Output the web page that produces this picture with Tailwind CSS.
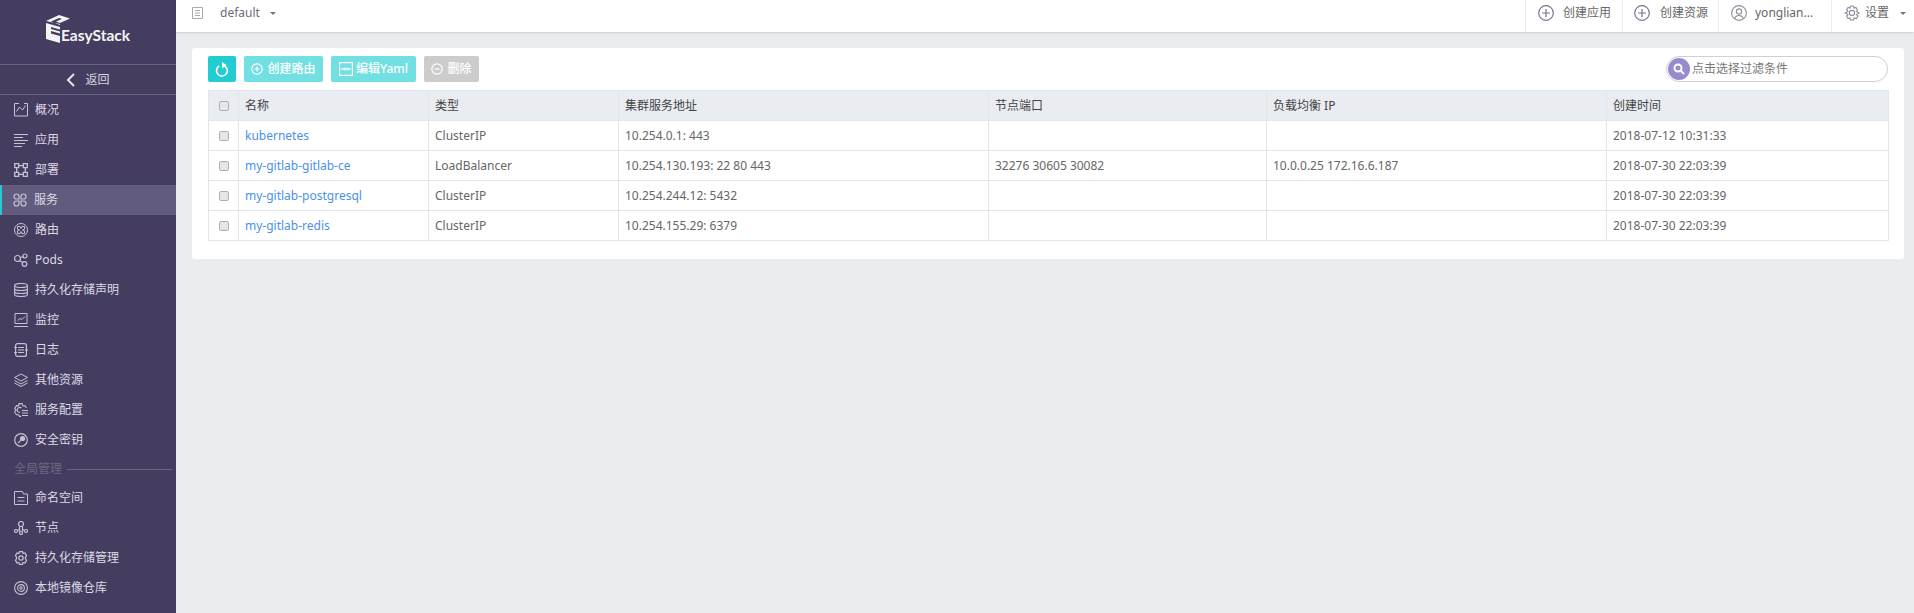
<!DOCTYPE html>
<html lang="zh">
<head>
<meta charset="UTF-8">
<title>EasyStack</title>
<script src="https://cdn.jsdelivr.net/npm/@tailwindcss/browser@4"></script>
</head>
<body class="bg-[#ebecf0] font-['Noto_Sans','Noto_Sans_CJK_SC',sans-serif] text-[12px] text-[#666]">
<div class="flex h-[613px] overflow-hidden">

  <!-- sidebar -->
  <aside class="w-[176px] shrink-0 bg-[#453d5f] text-[#dcdae6]">
    <div class="h-[65px] flex items-start pl-[46px] pt-[15px] border-b border-[#69637f]">
      <svg class="w-[24px] h-[28px] shrink-0 -mr-[9px]" viewBox="0 0 24 28" fill="#f4f4f6">
        <path d="M0 6 13 0 24 3.500 14 8 10 6.500 16 4 13 3 5 6.500 14 10V9L0 6z"/>
        <path d="M0 8 14 12V14.500L5 12V14L14 16.500V18.500L5 16V18.500L14 21V28L0 24z"/>
      </svg>
      <span class="font-['Lato',sans-serif] font-bold text-[15.5px] leading-none mt-[13px] text-[#f4f4f6]">EasyStack</span>
    </div>
    <div class="h-[30px] flex items-center justify-center gap-[9px] border-b border-[#69637f] text-[#d8d6e2]">
      <svg class="w-[10px] h-[14px]" viewBox="0 0 10 14" fill="none" stroke="#e4e3ea" stroke-width="2"><path d="M8 1 2 7l6 6"/></svg>
      <span>返回</span>
    </div>

    <nav>
      <a class="h-[30px] flex items-center pl-[14px] gap-[7px]">
        <svg class="w-[14px] h-[14px]" viewBox="0 0 14 14" fill="none" stroke="#c5c3d4"><path d="M5 .5H.5v12.500h13V.5H10M2.500 8.500l3-4.500 3 3 3-4.500"/></svg><span>概况</span>
      </a>
      <a class="h-[30px] flex items-center pl-[14px] gap-[7px]">
        <svg class="w-[14px] h-[14px]" viewBox="0 0 14 14" fill="none" stroke="#c5c3d4"><path d="M0 1.500h14M0 4.500h9M0 7.500h14M0 10.500h11M0 13.500h8"/></svg><span>应用</span>
      </a>
      <a class="h-[30px] flex items-center pl-[14px] gap-[7px]">
        <svg class="w-[14px] h-[14px]" viewBox="0 0 14 14" fill="none" stroke="#c5c3d4" stroke-width="1.300"><path d="M.7.700h4v4h-4zM9.300.7h4v4h-4zM.7 9.300h4v4h-4zM9.300 9.300h4v4h-4zM4.700 2.700h4.600M4.700 11.300h4.600M2.700 4.700v4.600M11.300 4.700v4.600"/></svg><span>部署</span>
      </a>
      <a class="h-[30px] flex items-center pl-[11px] gap-[7px] bg-[#615c7d] border-l-2 border-[#22ccd2]">
        <svg class="w-[14px] h-[14px]" viewBox="0 0 14 14" fill="none" stroke="#c5c3d4" stroke-width="1.200"><path d="M6 3.500V6H3.500A2.500 2.500 0 1 1 6 3.500zM8 3.500V6h2.500A2.500 2.500 0 1 0 8 3.500zM6 10.500V8H3.500A2.500 2.500 0 1 0 6 10.500zM8 10.500V8h2.500A2.500 2.500 0 1 1 8 10.500z"/></svg><span>服务</span>
      </a>
      <a class="h-[30px] flex items-center pl-[14px] gap-[7px]">
        <svg class="w-[14px] h-[14px]" viewBox="0 0 14 14" fill="none" stroke="#c5c3d4"><circle cx="7" cy="7" r="6.500"/><path d="M3.500 3.500h2.700l.8 2 .8-2h2.700v2.700l-2 .8 2 .8v2.700H7.800L7 8.500l-.8 2H3.500V7.800l2-.8-2-.8z"/></svg><span>路由</span>
      </a>
      <a class="h-[30px] flex items-center pl-[14px] gap-[7px]">
        <svg class="w-[14px] h-[14px]" viewBox="0 0 14 14" fill="none" stroke="#c5c3d4" stroke-width="1.200"><circle cx="3.500" cy="5.500" r="3"/><circle cx="11" cy="3" r="2"/><circle cx="10.500" cy="11" r="2.300"/><path d="M6.300 4.500 9.200 3.500M5.500 7.800l3.300 1.700"/></svg><span>Pods</span>
      </a>
      <a class="h-[30px] flex items-center pl-[14px] gap-[7px]">
        <svg class="w-[14px] h-[14px]" viewBox="0 0 14 14" fill="none" stroke="#c5c3d4" stroke-width="1.100"><ellipse cx="7" cy="2.500" rx="6.400" ry="2"/><path d="M.6 2.500v9c0 1.100 2.900 2 6.400 2s6.400-.9 6.400-2v-9M.6 5.500c0 1.100 2.900 2 6.400 2s6.400-.9 6.400-2M.6 8.500c0 1.100 2.900 2 6.400 2s6.400-.9 6.400-2"/></svg><span>持久化存储声明</span>
      </a>
      <a class="h-[30px] flex items-center pl-[14px] gap-[7px]">
        <svg class="w-[14px] h-[14px]" viewBox="0 0 14 14" fill="none" stroke="#c5c3d4"><path d="M1 .5h12v10H1zM0 13.500h14M3.500 7.500l2.500-2 2 1 3-3"/></svg><span>监控</span>
      </a>
      <a class="h-[30px] flex items-center pl-[14px] gap-[7px]">
        <svg class="w-[14px] h-[14px]" viewBox="0 0 14 14" fill="none" stroke="#c5c3d4" stroke-width="1.200"><rect x="1.600" y=".6" width="10.800" height="12.800" rx="2"/><path d="M4 4.500h6M4 7h6M4 9.500h6M0 4.500h3M0 9.500h3M11 7h3"/></svg><span>日志</span>
      </a>
      <a class="h-[30px] flex items-center pl-[14px] gap-[7px]">
        <svg class="w-[14px] h-[14px]" viewBox="0 0 14 14" fill="none" stroke="#c5c3d4"><path d="M7 1 .5 4.500 7 8l6.500-3.500zM.5 7.500 7 11l6.500-3.500M.5 10 7 13.500 13.500 10"/></svg><span>其他资源</span>
      </a>
      <a class="h-[30px] flex items-center pl-[14px] gap-[7px]">
        <svg class="w-[14px] h-[14px]" viewBox="0 0 14 14" fill="none" stroke="#c5c3d4" stroke-width="1.100"><path d="M12.500 5 11 2.800 9 3 8 .6H5L4.500 2.800 2.500 2.600 .6 5.500 2 7 .6 9l1.900 2.700h2L5.500 13.400H7M7.500 5.200A2.500 2.500 0 1 0 6 9.400M8 7.500h6M8 10h6M8 12.500h6"/></svg><span>服务配置</span>
      </a>
      <a class="h-[30px] flex items-center pl-[14px] gap-[7px]">
        <svg class="w-[14px] h-[14px]" viewBox="0 0 14 14" fill="none" stroke="#c5c3d4" stroke-width="1.200"><circle cx="7" cy="7" r="6.300"/><path d="M4 10.200l3-3"/><circle cx="8.500" cy="5.500" r="2" fill="#c5c3d4"/></svg><span>安全密钥</span>
      </a>
    </nav>

    <div class="h-[28px] flex items-center pl-[14px] pr-[4px] gap-[5px] text-[#6d6880]">
      <span class="shrink-0">全局管理</span><span class="flex-1 h-px bg-[#69637f]"></span>
    </div>

    <nav>
      <a class="h-[30px] flex items-center pl-[14px] gap-[7px]">
        <svg class="w-[14px] h-[14px]" viewBox="0 0 14 14" fill="none" stroke="#c5c3d4"><path d="M.5.500h8l1 2.500h4v10.500H.5zM3.500 6.500h7M3.500 10h7"/></svg><span>命名空间</span>
      </a>
      <a class="h-[30px] flex items-center pl-[14px] gap-[7px]">
        <svg class="w-[14px] h-[14px]" viewBox="0 0 14 14" fill="none" stroke="#c5c3d4" stroke-width="1.200"><circle cx="7" cy="3" r="2.500"/><circle cx="2" cy="10" r="1.500"/><circle cx="12" cy="10" r="1.500"/><circle cx="7" cy="12" r="1.500"/><path d="M5.500 5.500v5M8.500 5.500v5M3.500 9.500l2-1M10.500 9.500l-2-1"/></svg><span>节点</span>
      </a>
      <a class="h-[30px] flex items-center pl-[14px] gap-[7px]">
        <svg class="w-[14px] h-[14px]" viewBox="0 0 14 14" fill="none" stroke="#c5c3d4" stroke-width="1.200"><path d="M5.500.6h3l.6 1.900 1.900-.5 1.500 2.600L11.200 7l1.300 2.400-1.500 2.600-1.900-.5-.6 1.900h-3l-.6-1.900-1.900.5-1.500-2.600L2.800 7 1.500 4.600 3 2l1.900.5z"/><circle cx="7" cy="7" r="2.200"/></svg><span>持久化存储管理</span>
      </a>
      <a class="h-[30px] flex items-center pl-[14px] gap-[7px]">
        <svg class="w-[14px] h-[14px]" viewBox="0 0 14 14" fill="none" stroke="#c5c3d4" stroke-width="1.100"><circle cx="7" cy="7" r="6.400"/><circle cx="7" cy="7" r="3.400"/><circle cx="7" cy="7" r="1.200"/></svg><span>本地镜像仓库</span>
      </a>
    </nav>
  </aside>

  <!-- main -->
  <div class="flex-1 min-w-0">
    <header class="h-[32px] bg-white flex items-center shadow-[0_1px_2px_rgba(0,0,0,0.12)]">
      <div class="flex items-center h-full pb-[6px]">
        <svg class="ml-[16px] w-[11px] h-[12px]" viewBox="0 0 11 12" fill="none" stroke="#a9a9b2"><path d="M.5.500h10v11H.5zM3 3.500h5M3 6h5M3 8.500h5"/></svg>
        <span class="ml-[17px] text-[#6f6a7d]">default</span>
        <span class="ml-[10px] border-x-[3px] border-t-[3px] border-x-transparent border-t-[#777]"></span>
      </div>

      <div class="ml-auto flex h-full">
        <div class="w-[97px] flex items-center pl-[12px] pb-[6px] gap-[9px] border-l border-[#ebebee]">
          <svg class="w-[16px] h-[16px]" viewBox="0 0 16 16" fill="none" stroke="#77748a" stroke-width="1.200"><circle cx="8" cy="8" r="7.300"/><path d="M8 4v8M4 8h8"/></svg><span>创建应用</span>
        </div>
        <div class="w-[96px] flex items-center pl-[11px] pb-[6px] gap-[10px] border-l border-[#ebebee]">
          <svg class="w-[16px] h-[16px]" viewBox="0 0 16 16" fill="none" stroke="#77748a" stroke-width="1.200"><circle cx="8" cy="8" r="7.300"/><path d="M8 4v8M4 8h8"/></svg><span>创建资源</span>
        </div>
        <div class="w-[113px] flex items-center pl-[12px] pb-[6px] gap-[8px] border-l border-[#ebebee]">
          <svg class="w-[16px] h-[16px]" viewBox="0 0 16 16" fill="none" stroke="#8e8e9c" stroke-width="1.100"><circle cx="8" cy="8" r="7.400"/><circle cx="8" cy="6.500" r="2.600"/><path d="M3.500 13.500C4.500 11 6 10.500 8 10.500s3.500.5 4.500 3"/></svg><span>yonglian...</span>
        </div>
        <div class="w-[83px] flex items-center pl-[12px] pb-[6px] gap-[5px] border-l border-[#ebebee]">
          <svg class="w-[16px] h-[16px]" viewBox="0 0 16 16" fill="none" stroke="#8e8e9c" stroke-width="1.100"><path d="M6.500 1h3l.5 2 1.900-.6 1.500 2.600L12.500 6.500 15 8l-2.500 1.500 1.400 1.500-1.500 2.600L10 13l-.5 2h-3L6 13l-1.900.6L2.600 11l1.400-1.500L1 8l3-1.500L2.600 5l1.500-2.600L6 3z"/><circle cx="8" cy="8" r="2.600"/></svg><span>设置</span>
          <span class="ml-[6px] border-x-[3px] border-t-[3px] border-x-transparent border-t-[#777]"></span>
        </div>
      </div>
    </header>

    <main class="mt-[16px] ml-[16px] mr-[10px] h-[211px] bg-white rounded-[3px] px-[16px] pt-[8px]">
      <div class="h-[26px] flex items-center gap-[8px] mb-[8px]">
        <button class="w-[28px] h-[26px] bg-[#22ccd2] rounded-[2px] flex items-center justify-center">
          <svg class="w-[14px] h-[15px]" viewBox="0 0 14 15" fill="none" stroke="#fff" stroke-width="1.600"><path d="M4.200 4A5.400 5.400 0 1 0 9 3.700"/><path d="M7 0v6.400L11.500 3z" fill="#fff" stroke="none"/></svg>
        </button>
        <button class="w-[79px] h-[26px] bg-[#72dfe2] rounded-[2px] text-white font-medium flex items-center justify-center gap-[4px]">
          <svg class="w-[12px] h-[12px]" viewBox="0 0 12 12" fill="none" stroke="#fff" stroke-width="1.200"><circle cx="6" cy="6" r="5.200"/><path d="M3.500 6h5M6 3.500v5"/></svg><span>创建路由</span>
        </button>
        <button class="w-[85px] h-[26px] bg-[#72dfe2] rounded-[2px] text-white font-medium flex items-center justify-center gap-[3px]">
          <svg class="w-[14px] h-[14px]" viewBox="0 0 14 14" fill="none" stroke="#fff" stroke-width="1.200"><path d="M.6.600h12.800v12.800H.6z"/><path d="M2.500 7h3M8.500 7h3" stroke-width="1.500"/><path d="M5.500 5 8 7 5.500 9zM8.500 5 6.500 7l2 2z" fill="#fff" stroke="none"/></svg><span>编辑Yaml</span>
        </button>
        <button class="w-[55px] h-[26px] bg-[#cccccc] rounded-[2px] text-white font-medium flex items-center justify-center gap-[4px]">
          <svg class="w-[12px] h-[12px]" viewBox="0 0 12 12" fill="none" stroke="#fff" stroke-width="1.200"><circle cx="6" cy="6" r="5.200"/><path d="M3.500 6h5"/></svg><span>删除</span>
        </button>
        <div class="ml-auto w-[222px] h-[26px] rounded-full border border-[#cfcfd6] flex items-center pl-[1px] gap-[2px] text-[#777]">
          <span class="w-[22px] h-[22px] rounded-full bg-[#9a89cd] flex items-center justify-center">
            <svg class="w-[12px] h-[12px]" viewBox="0 0 12 12" fill="none" stroke="#fff" stroke-width="2"><circle cx="5" cy="5" r="3.500"/><path d="m8 8 3 3"/></svg>
          </span>
          <span>点击选择过滤条件</span>
        </div>
      </div>

      <table class="w-[1680px] table-fixed border-collapse border border-[#e2e5ea] text-[#666] [&_td]:border [&_td]:border-[#e2e5ea] [&_td]:h-[30px] [&_td]:px-[6px] [&_td]:py-0 [&_th]:border [&_th]:border-[#e2e5ea] [&_th]:h-[30px] [&_th]:px-[6px] [&_th]:py-0 [&_th]:font-normal [&_th]:text-left [&_th]:text-[#444] [&_th]:bg-[#e9ecf0]">
        <colgroup>
          <col class="w-[30px]"><col class="w-[190px]"><col class="w-[190px]"><col class="w-[370px]"><col class="w-[278px]"><col class="w-[340px]"><col class="w-[282px]">
        </colgroup>
        <thead>
          <tr>
            <th><span class="block mx-auto w-[10px] h-[10px] border border-[#b0b0b0] bg-[#e6e6e6] rounded-[2px]"></span></th>
            <th>名称</th><th>类型</th><th>集群服务地址</th><th>节点端口</th><th>负载均衡 IP</th><th>创建时间</th>
          </tr>
        </thead>
        <tbody>
          <tr>
            <td><span class="block mx-auto w-[10px] h-[10px] border border-[#b0b0b0] bg-[#e6e6e6] rounded-[2px]"></span></td>
            <td class="text-[#4a90e8]">kubernetes</td><td>ClusterIP</td><td>10.254.0.1: 443</td><td></td><td></td><td>2018-07-12 10:31:33</td>
          </tr>
          <tr>
            <td><span class="block mx-auto w-[10px] h-[10px] border border-[#b0b0b0] bg-[#e6e6e6] rounded-[2px]"></span></td>
            <td class="text-[#4a90e8]">my-gitlab-gitlab-ce</td><td>LoadBalancer</td><td>10.254.130.193: 22 80 443</td><td>32276 30605 30082</td><td>10.0.0.25 172.16.6.187</td><td>2018-07-30 22:03:39</td>
          </tr>
          <tr>
            <td><span class="block mx-auto w-[10px] h-[10px] border border-[#b0b0b0] bg-[#e6e6e6] rounded-[2px]"></span></td>
            <td class="text-[#4a90e8]">my-gitlab-postgresql</td><td>ClusterIP</td><td>10.254.244.12: 5432</td><td></td><td></td><td>2018-07-30 22:03:39</td>
          </tr>
          <tr>
            <td><span class="block mx-auto w-[10px] h-[10px] border border-[#b0b0b0] bg-[#e6e6e6] rounded-[2px]"></span></td>
            <td class="text-[#4a90e8]">my-gitlab-redis</td><td>ClusterIP</td><td>10.254.155.29: 6379</td><td></td><td></td><td>2018-07-30 22:03:39</td>
          </tr>
        </tbody>
      </table>
    </main>
  </div>
</div>
</body>
</html>
